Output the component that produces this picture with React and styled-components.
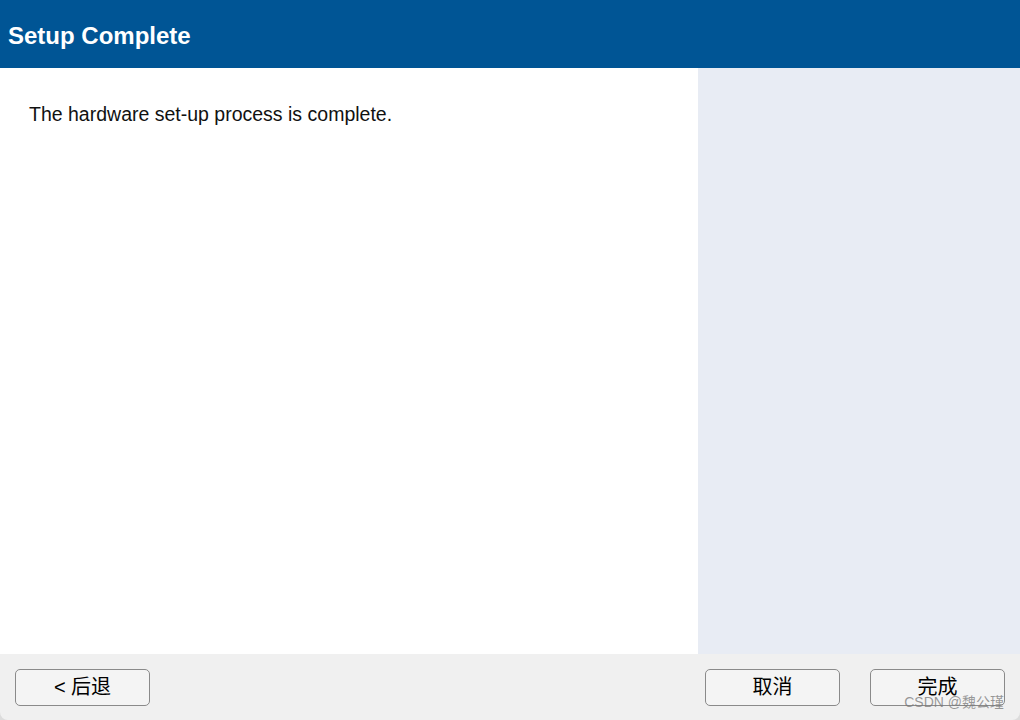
import styled, { createGlobalStyle } from "styled-components";

const Global = createGlobalStyle`
  html, body { margin: 0; padding: 0; background: #dcdcdc; }
  body { font-family: "Liberation Sans", Arial, "Noto Sans CJK SC", sans-serif; }
`;

const Wrap = styled.div`
  position: relative;
  width: 1020px;
  height: 720px;
  display: flex;
  flex-direction: column;
  background: #f0f0f0;
  border-radius: 0 0 8px 8px;
  overflow: hidden;
`;

const Header = styled.div`
  height: 68px;
  flex-shrink: 0;
  background: #005595;
  display: flex;
  align-items: center;
  padding: 4px 0 0 8px;
  box-sizing: border-box;

  h1 {
    margin: 0;
    color: #fff;
    font-size: 24px;
    font-weight: 700;
  }
`;

const Body = styled.div`
  height: 586px;
  display: flex;
`;

const Main = styled.div`
  width: 698px;
  background: #fff;
  padding: 35px 0 0 29px;
  box-sizing: border-box;

  p {
    margin: 0;
    font-size: 19.5px;
    color: #111;
  }
`;

const Side = styled.div`
  flex: 1;
  background: #e8ecf4;
`;

const Footer = styled.div`
  flex: 1;
  display: flex;
  align-items: center;
  padding: 0 15px;
  gap: 30px;
`;

const Btn = styled.button`
  width: 135px;
  height: 37px;
  margin-top: 1px;
  border: 1px solid #8a8a8a;
  border-radius: 5px;
  background: #f4f4f4;
  color: #000;
  font-family: "Liberation Sans", Arial, "Noto Sans CJK SC", sans-serif;
  font-size: 20px;
  line-height: 1;
  padding: 0 0 1px;
  margin-left: ${(p) => (p.$push ? "auto" : "0")};
`;

const Mark = styled.span`
  position: absolute;
  right: 16px;
  bottom: 9px;
  font-size: 14px;
  color: rgba(120, 120, 120, 0.75);
  font-family: "Liberation Sans", Arial, "Noto Sans CJK SC", sans-serif;
`;

export default function App() {
  return (
    <>
      <Global />
      <Wrap>
        <Header>
          <h1>Setup Complete</h1>
        </Header>
        <Body>
          <Main>
            <p>The hardware set-up process is complete.</p>
          </Main>
          <Side />
        </Body>
        <Footer>
          <Btn>&lt; 后退</Btn>
          <Btn $push>取消</Btn>
          <Btn>完成</Btn>
        </Footer>
        <Mark>CSDN @魏公瑾</Mark>
      </Wrap>
    </>
  );
}
